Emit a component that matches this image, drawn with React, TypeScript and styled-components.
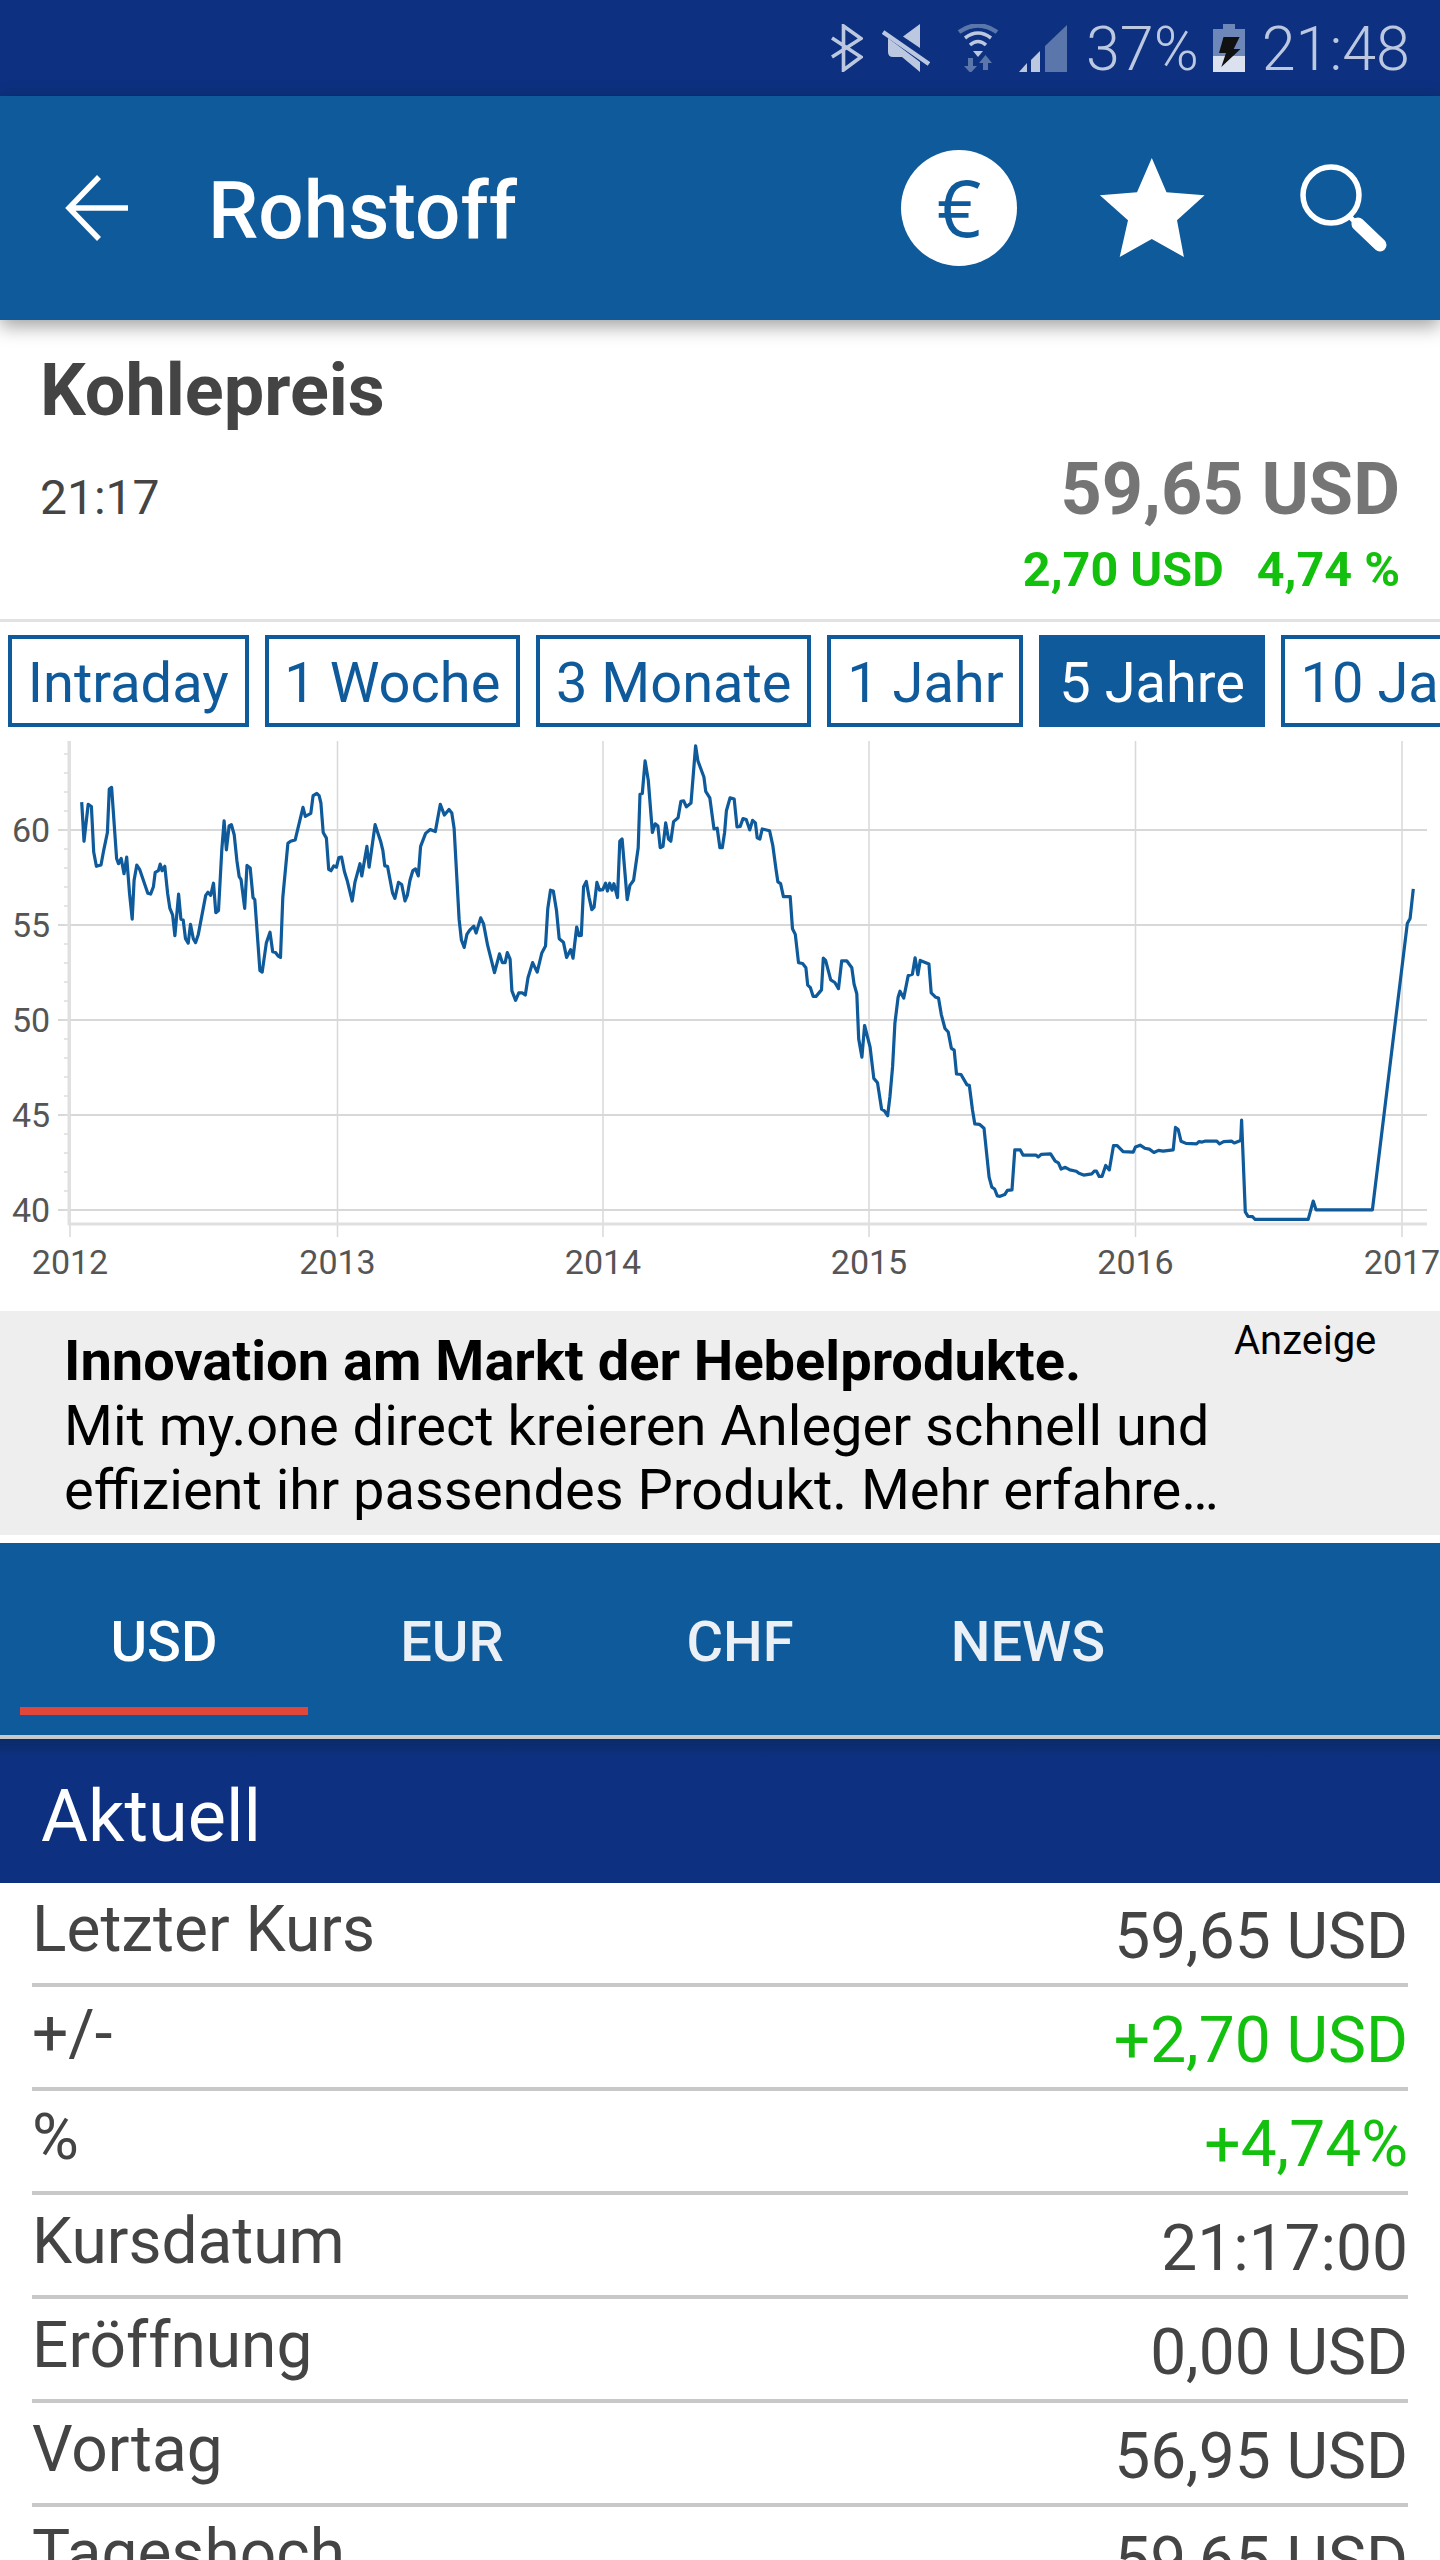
import React from "react";
import styled, { createGlobalStyle } from "styled-components";

const BLUE = "#0e5a9a";
const NAVY = "#0d3180";
const GREEN = "#14c00e";
const STATUS = "#bcc8e0";
const STATUS_DIM = "#5a76aa";

const GlobalStyle = createGlobalStyle`
  html, body {
    margin: 0;
    padding: 0;
    background: #fff;
    overflow: hidden;
  }
  body {
    font-family: Roboto, "Liberation Sans", sans-serif;
  }
  * {
    box-sizing: border-box;
  }
`;

const Page = styled.div`
  width: 1440px;
  height: 2560px;
  overflow: hidden;
  background: #fff;
`;

const StatusBar = styled.div`
  height: 96px;
  background: ${NAVY};
  display: flex;
  align-items: flex-start;
  padding: 24px 0 0 831px;
  color: ${STATUS};
`;

const StatusIcon = styled.svg<{ $gap?: number }>`
  display: block;
  flex: none;
  margin-left: ${(p) => p.$gap ?? 0}px;
`;

const StatusText = styled.span<{ $gap: number }>`
  font-size: 61px;
  font-weight: 300;
  line-height: 48px;
  margin-left: ${(p) => p.$gap}px;
  white-space: nowrap;
  transform: translateY(1px);
`;

const AppBar = styled.header`
  position: relative;
  z-index: 2;
  height: 224px;
  background: ${BLUE};
  display: flex;
  align-items: center;
  padding: 0 52px 0 65px;
  box-shadow: 0 6px 18px rgba(0, 0, 0, 0.38);
`;

const AppTitle = styled.h1`
  margin: 5px 0 0 80px;
  color: #fff;
  font-size: 80px;
  font-weight: 500;
  line-height: 90px;
`;

const Actions = styled.div`
  margin-left: auto;
  display: flex;
  align-items: center;
`;

const EuroBadge = styled.div`
  width: 116px;
  height: 116px;
  border-radius: 50%;
  background: #fff;
  color: ${BLUE};
  font-family: "Open Sans", sans-serif;
  font-size: 78px;
  font-weight: 400;
  line-height: 114px;
  text-align: center;
`;

const ActionIcon = styled.svg<{ $gap: number }>`
  display: block;
  margin-left: ${(p) => p.$gap}px;
`;

const Quote = styled.section`
  height: 302px;
  padding: 35px 40px 0 40px;
  border-bottom: 3px solid #e2e2e2;
`;

const QuoteName = styled.div`
  color: #444;
  font-size: 72px;
  font-weight: 700;
  line-height: 72px;
`;

const QuoteRow = styled.div`
  margin-top: 27px;
  display: flex;
  justify-content: space-between;
  align-items: baseline;
`;

const QuoteTime = styled.span`
  color: #444;
  font-size: 48px;
  font-weight: 400;
  line-height: 72px;
`;

const QuotePrice = styled.span`
  color: #757575;
  font-size: 72px;
  font-weight: 700;
  line-height: 72px;
`;

const QuoteChange = styled.div`
  margin-top: 8px;
  display: flex;
  justify-content: flex-end;
  gap: 33px;
  color: ${GREEN};
  font-size: 48.5px;
  font-weight: 700;
  line-height: 56px;
`;

const RangeBar = styled.nav`
  height: 105px;
  padding: 13px 0 0 8px;
  display: flex;
  gap: 16px;
  overflow: hidden;
`;

const RangeButton = styled.div<{ $active?: boolean }>`
  flex: none;
  height: 92px;
  padding: 0 15.8px;
  border: 4px solid ${BLUE};
  background: ${(p) => (p.$active ? BLUE : "#fff")};
  color: ${(p) => (p.$active ? "#fff" : BLUE)};
  font-size: 56px;
  line-height: 88px;
  white-space: nowrap;
`;

const ChartBox = styled.div`
  height: 584px;
`;

const ChartSvg = styled.svg`
  display: block;
  width: 1440px;
  height: 584px;
`;

const AxisLabel = styled.text`
  fill: #555;
  font-family: Roboto, sans-serif;
  font-size: 34px;
`;

const Ad = styled.aside`
  position: relative;
  height: 224px;
  padding: 18px 60px 0 64px;
  background: #eee;
  color: #000;
  font-size: 56px;
  line-height: 64.5px;
`;

const AdTitle = styled.div`
  font-weight: 700;
  white-space: nowrap;
`;

const AdLine = styled.div`
  white-space: nowrap;
`;

const AdTag = styled.span`
  position: absolute;
  top: 8px;
  left: 1234px;
  font-size: 40px;
  line-height: 44px;
`;

const Tabs = styled.nav`
  margin-top: 8px;
  height: 196px;
  padding-left: 20px;
  display: flex;
  align-items: flex-start;
  background: ${BLUE};
  border-bottom: 4px solid #c8c8c8;
`;

const Tab = styled.div<{ $active?: boolean }>`
  width: 288px;
  height: 172px;
  padding-top: 69px;
  border-bottom: 8px solid ${(p) => (p.$active ? "#e0463a" : "transparent")};
  color: ${(p) => (p.$active ? "#fff" : "#eaf0f6")};
  font-size: 56px;
  font-weight: 500;
  line-height: 60px;
  text-align: center;
`;

const SectionHeader = styled.h2`
  margin: 0;
  height: 144px;
  padding: 33px 0 0 41px;
  background: linear-gradient(#0a2a68 0, ${NAVY} 18px);
  color: #fff;
  font-size: 72px;
  font-weight: 400;
  line-height: 90px;
`;

const DataList = styled.div`
  padding: 0 32px;
`;

const DataRow = styled.div`
  height: 104px;
  display: flex;
  justify-content: space-between;
  border-bottom: 4px solid #c8c8c8;
  color: #444;
  font-size: 64px;
  line-height: 64px;
  white-space: nowrap;
`;

const DataLabel = styled.span`
  padding-top: 15px;
`;

const DataValue = styled.span<{ $up?: boolean }>`
  padding-top: 22px;
  color: ${(p) => (p.$up ? GREEN : "#444")};
`;

const RANGES = ["Intraday", "1 Woche", "3 Monate", "1 Jahr", "5 Jahre", "10 Jahre"];
const TABS = ["USD", "EUR", "CHF", "NEWS"];
const ROWS: { label: string; value: string; up?: boolean }[] = [
  { label: "Letzter Kurs", value: "59,65 USD" },
  { label: "+/-", value: "+2,70 USD", up: true },
  { label: "%", value: "+4,74%", up: true },
  { label: "Kursdatum", value: "21:17:00" },
  { label: "Eröffnung", value: "0,00 USD" },
  { label: "Vortag", value: "56,95 USD" },
  { label: "Tageshoch", value: "59,65 USD" },
];

// traced off the crops of the chart, left half then right half
const LEFT_TRACE =
  "178,420 183,510 192,425 199,430 204,535 210,568 220,565 226,530 234,490 238,390 243,386 254,550 258,562 264,550 270,585 276,547 282,630 288,690 292,600 298,565 304,575 322,630 328,632 334,615 338,582 345,578 349,563 353,578 359,568 365,630 370,665 376,680 381,728 389,632 394,690 399,692 404,735 410,745 415,702 421,735 426,744 432,725 448,635 453,628 459,635 465,607 470,675 476,670 483,530 488,463 493,530 499,475 504,472 510,495 516,555 521,592 525,598 533,665 538,566 545,572 551,640 555,645 566,808 571,812 580,745 588,720 594,765 600,767 606,775 611,778 616,640 627,515 633,510 643,507 649,480 660,432 665,453 677,446 682,405 690,400 695,405 699,422 704,490 711,503 716,575 721,578 727,567 733,570 738,548 744,547 750,580 756,600 767,648 773,605 784,562 788,590 799,522 804,570 817,472 829,510 834,532 838,567 844,568 855,630 860,642 868,605 875,610 882,648 887,635 893,600 899,578 905,574 911,590 916,522 927,492 937,483 948,488 959,425 968,450 978,437 984,445 989,480 1000,690 1005,738 1011,755 1017,725 1023,715 1032,706 1037,722 1047,687 1053,700 1062,750 1077,813 1088,770 1094,790 1100,790 1105,767 1111,782 1115,855 1123,877 1130,860 1138,860 1144,865 1150,825 1160,790 1170,812 1180,768 1188,752 1193,665 1199,623 1205,625 1212,670 1218,735 1227,743 1234,778 1243,760 1248,780 1256,708 1261,728 1266,727 1271,615 1277,603 1283,640 1289,668 1294,662 1300,605 1306,623 1313,622 1319,607 1323,625 1328,607 1333,623 1337,608 1345,640 1350,510 1355,505 1366,645 1372,612 1380,600 1390,525 1394,402 1399,400 1405,325 1412,370 1421,490 1427,470 1433,475 1438,525 1444,522 1450,468 1456,505 1461,510 1467,465 1477,456 1483,418 1489,417 1495,431 1505,422 1515,290 1520,325 1533,362 1537,395 1546,410 1555,482 1562,480 1568,525";
const RIGHT_TRACE =
  "5,525 10,490 14,440 22,410 31,413 37,477 44,476 50,458 57,460 65,484 71,462 77,468 81,502 87,505 92,482 108,486 115,520 122,575 126,604 132,608 138,638 153,638 158,712 164,725 171,790 180,792 187,802 191,842 197,848 203,868 209,868 221,853 225,780 230,785 241,830 250,836 258,850 265,786 276,786 287,802 292,840 298,862 302,966 309,1008 315,935 327,985 335,1057 343,1067 352,1128 358,1132 365,1143 370,1100 376,1030 381,930 388,870 392,856 400,872 410,820 419,817 425,779 431,818 436,785 455,793 460,860 470,870 476,872 482,910 490,942 497,950 504,988 510,992 515,1047 525,1048 538,1072 543,1073 550,1130 555,1162 565,1163 575,1172 586,1285 592,1308 598,1312 604,1328 610,1329 620,1325 626,1315 636,1314 642,1222 654,1222 660,1234 688,1234 693,1238 700,1232 720,1231 730,1248 737,1252 743,1266 752,1262 762,1268 776,1271 782,1276 792,1280 810,1277 815,1271 820,1271 826,1283 832,1283 840,1258 848,1268 857,1212 865,1212 878,1226 900,1227 905,1215 915,1211 925,1218 935,1220 945,1228 955,1223 965,1225 987,1222 992,1170 998,1175 1004,1202 1015,1207 1038,1208 1043,1203 1050,1204 1056,1202 1082,1202 1088,1208 1097,1203 1114,1202 1120,1206 1134,1200 1136,1153 1144,1365 1150,1375 1160,1376 1165,1382 1281,1382 1292,1340 1298,1360 1421,1360 1497,700 1503,688 1510,620";

const toChart = (trace: string, offset: number) =>
  trace
    .split(" ")
    .map((pair) => {
      const [x, y] = pair.split(",").map(Number);
      return `${(offset + x / 2.178).toFixed(1)},${(620 + y / 2.306).toFixed(1)}`;
    })
    .join(" ");

const LINE_POINTS = `${toChart(LEFT_TRACE, 0)} ${toChart(RIGHT_TRACE, 720)}`;

const Y_LABELS = [
  { text: "60", y: 830 },
  { text: "55", y: 925 },
  { text: "50", y: 1020 },
  { text: "45", y: 1115 },
  { text: "40", y: 1210 },
];
const X_LABELS = [
  { text: "2012", x: 70 },
  { text: "2013", x: 337.5 },
  { text: "2014", x: 603 },
  { text: "2015", x: 869 },
  { text: "2016", x: 1135.5 },
  { text: "2017", x: 1402 },
];
const MINOR_TICKS = Array.from({ length: 25 }, (_, i) => 1210 - 19 * i).filter((y) => y > 745);

const PriceChart = () => (
  <ChartBox>
    <ChartSvg viewBox="0 727 1440 584">
      {Y_LABELS.map((l) => (
        <line key={l.text} x1={58} x2={1427} y1={l.y} y2={l.y} stroke="#d8d8d8" strokeWidth={2} />
      ))}
      {MINOR_TICKS.map((y) => (
        <line key={y} x1={64} x2={70} y1={y} y2={y} stroke="#dcdcdc" strokeWidth={1.5} />
      ))}
      {X_LABELS.map((l) => (
        <line key={l.text} x1={l.x} x2={l.x} y1={741} y2={1237} stroke="#d8d8d8" strokeWidth={1.5} />
      ))}
      <line x1={69} x2={69} y1={741} y2={1225} stroke="#e0e0e0" strokeWidth={3} />
      <line x1={68} x2={1427} y1={1224} y2={1224} stroke="#e0e0e0" strokeWidth={3} />
      <polyline points={LINE_POINTS} fill="none" stroke={BLUE} strokeWidth={3.2} strokeLinejoin="round" />
      {Y_LABELS.map((l) => (
        <AxisLabel key={l.text} x={12} y={l.y + 12}>
          {l.text}
        </AxisLabel>
      ))}
      {X_LABELS.map((l) => (
        <AxisLabel key={l.text} x={l.x} y={1274} textAnchor="middle">
          {l.text}
        </AxisLabel>
      ))}
    </ChartSvg>
  </ChartBox>
);

const StatusIcons = () => (
  <>
    <StatusIcon width={32} height={48} viewBox="0 0 32 48">
      <path d="M1 14 L30 33 L12.5 46 V2 L30 14.5 L1 33" fill="none" stroke={STATUS} strokeWidth={3.6} />
    </StatusIcon>
    <StatusIcon $gap={19} width={48} height={48} viewBox="0 0 48 48">
      <path d="M38 0 V24 L21 12.5 Z" fill={STATUS} />
      <path d="M6 14 L38 38 V48 L20 33 H11 Q6 33 6 28 Z" fill={STATUS} />
      <path d="M1 8 L47 40" stroke={STATUS} strokeWidth={4.5} />
    </StatusIcon>
    <StatusIcon $gap={27} width={44} height={48} viewBox="0 0 44 48">
      <path d="M2 8 Q21 -5 40 8" fill="none" stroke={STATUS_DIM} strokeWidth={4.5} />
      <path d="M8 14 Q21 4 34 14" fill="none" stroke={STATUS} strokeWidth={3.5} />
      <path d="M13 21 Q21 14 29 21" fill="none" stroke={STATUS} strokeWidth={3.5} />
      <path d="M16 27 H26 L21 33 Z" fill={STATUS} />
      <path d="M11 34 H16 V42 H20 L13.5 49 L7 42 H11 Z" fill={STATUS_DIM} />
      <path d="M26 46 H31 V39 H35 L28.5 31 L22 39 H26 Z" fill={STATUS_DIM} />
    </StatusIcon>
    <StatusIcon $gap={17} width={49} height={48} viewBox="0 0 49 48">
      <path d="M1 48 L9 39 V48 Z" fill={STATUS} />
      <path d="M13 36 L22 27 V48 H13 Z" fill={STATUS} />
      <path d="M27 48 V22 L49 1 V48 Z" fill={STATUS_DIM} />
    </StatusIcon>
    <StatusText $gap={19}>37%</StatusText>
    <StatusIcon $gap={14} width={32} height={48} viewBox="0 0 32 48">
      <path d="M10 0 H22 V5 H32 V32 H0 V5 H10 Z" fill="#6c87b8" />
      <path d="M0 32 H32 V48 H0 Z" fill="#dbe1ee" />
      <path d="M10.5 13 H26.6 L20.7 25 H27.5 L8.3 43 L13 29 H6 Z" fill="#111" />
    </StatusIcon>
    <StatusText $gap={17}>21:48</StatusText>
  </>
);

const App = () => (
  <Page>
    <GlobalStyle />
    <StatusBar>
      <StatusIcons />
    </StatusBar>
    <AppBar>
      <svg width={63} height={66} viewBox="0 0 63 66">
        <path d="M63 33 H4 M34 2 L4 33 L34 64" fill="none" stroke="#fff" strokeWidth={5.5} />
      </svg>
      <AppTitle>Rohstoff</AppTitle>
      <Actions>
        <EuroBadge>€</EuroBadge>
        <ActionIcon $gap={82} width={106} height={100} viewBox="0 0 106 100">
          <path
            d="M52.8 0 L67.5 34.3 L105.6 37.3 L78 62.3 L84.9 99 L52.8 81 L20.7 99 L29 62.3 L0.9 37.3 L38 34.3 Z"
            fill="#fff"
          />
        </ActionIcon>
        <ActionIcon $gap={95} width={88} height={90} viewBox="0 0 88 90">
          <circle cx={31} cy={32} r={28} fill="none" stroke="#fff" strokeWidth={5.5} />
          <path d="M50 54 L58 62" stroke="#fff" strokeWidth={5} />
          <path d="M58 61 L80 82" stroke="#fff" strokeWidth={13} strokeLinecap="round" />
        </ActionIcon>
      </Actions>
    </AppBar>
    <Quote>
      <QuoteName>Kohlepreis</QuoteName>
      <QuoteRow>
        <QuoteTime>21:17</QuoteTime>
        <QuotePrice>59,65 USD</QuotePrice>
      </QuoteRow>
      <QuoteChange>
        <span>2,70 USD</span>
        <span>4,74 %</span>
      </QuoteChange>
    </Quote>
    <RangeBar>
      {RANGES.map((r) => (
        <RangeButton key={r} $active={r === "5 Jahre"}>
          {r}
        </RangeButton>
      ))}
    </RangeBar>
    <PriceChart />
    <Ad>
      <AdTitle>Innovation am Markt der Hebelprodukte.</AdTitle>
      <AdLine>Mit my.one direct kreieren Anleger schnell und</AdLine>
      <AdLine>effizient ihr passendes Produkt. Mehr erfahre…</AdLine>
      <AdTag>Anzeige</AdTag>
    </Ad>
    <Tabs>
      {TABS.map((t) => (
        <Tab key={t} $active={t === "USD"}>
          {t}
        </Tab>
      ))}
    </Tabs>
    <SectionHeader>Aktuell</SectionHeader>
    <DataList>
      {ROWS.map((row) => (
        <DataRow key={row.label}>
          <DataLabel>{row.label}</DataLabel>
          <DataValue $up={row.up}>{row.value}</DataValue>
        </DataRow>
      ))}
    </DataList>
  </Page>
);

export default App;
